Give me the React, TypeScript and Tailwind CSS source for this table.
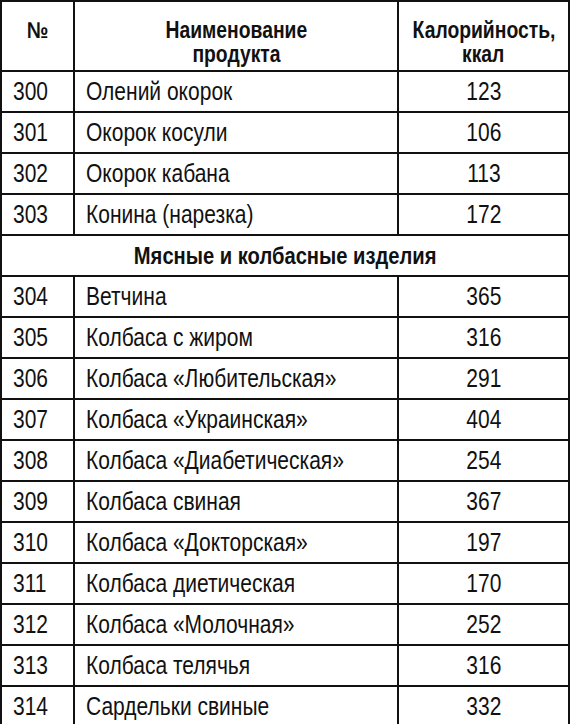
const meat = [
  { id: 300, name: 'Олений окорок', kcal: 123 },
  { id: 301, name: 'Окорок косули', kcal: 106 },
  { id: 302, name: 'Окорок кабана', kcal: 113 },
  { id: 303, name: 'Конина (нарезка)', kcal: 172 },
];

const sausages = [
  { id: 304, name: 'Ветчина', kcal: 365 },
  { id: 305, name: 'Колбаса с жиром', kcal: 316 },
  { id: 306, name: 'Колбаса «Любительская»', kcal: 291 },
  { id: 307, name: 'Колбаса «Украинская»', kcal: 404 },
  { id: 308, name: 'Колбаса «Диабетическая»', kcal: 254 },
  { id: 309, name: 'Колбаса свиная', kcal: 367 },
  { id: 310, name: 'Колбаса «Докторская»', kcal: 197 },
  { id: 311, name: 'Колбаса диетическая', kcal: 170 },
  { id: 312, name: 'Колбаса «Молочная»', kcal: 252 },
  { id: 313, name: 'Колбаса телячья', kcal: 316 },
  { id: 314, name: 'Сардельки свиные', kcal: 332 },
];

// Liberation Sans squeezed to the width of a narrow grotesque
function Narrow({ children, center }: { children: React.ReactNode; center?: boolean }) {
  return (
    <span
      className={
        center
          ? 'inline-block whitespace-nowrap origin-center scale-x-[0.84]'
          : 'inline-block whitespace-nowrap origin-left scale-x-[0.84]'
      }
    >
      {children}
    </span>
  );
}

function Row({ id, name, kcal }: { id: number; name: string; kcal: number }) {
  return (
    <tr className="h-[41px]">
      <td className="border-2 border-[#111] pl-[11px] align-middle">
        <Narrow>{id}</Narrow>
      </td>
      <td className="border-2 border-[#111] pl-[11px] align-middle">
        <Narrow>{name}</Narrow>
      </td>
      <td className="border-2 border-[#111] text-center align-middle">
        <Narrow center>{kcal}</Narrow>
      </td>
    </tr>
  );
}

export default function App() {
  return (
    <div className="min-h-screen bg-white text-[#111] font-['Liberation_Sans',Arial,sans-serif]">
      <table className="w-[568px] table-fixed border-collapse text-[25px] leading-none">
        <colgroup>
          <col className="w-[73px]" />
          <col className="w-[324px]" />
          <col className="w-[171px]" />
        </colgroup>
        <thead>
          <tr className="h-[70px] text-[23px] font-bold leading-[24px]">
            <th className="border-2 border-[#111] pt-[16px] align-top">
              <Narrow center>№</Narrow>
            </th>
            <th className="border-2 border-[#111] pt-[16px] align-top">
              <Narrow center>Наименование</Narrow>
              <br />
              <Narrow center>продукта</Narrow>
            </th>
            <th className="border-2 border-[#111] pt-[16px] align-top">
              <Narrow center>Калорийность,</Narrow>
              <br />
              <Narrow center>ккал</Narrow>
            </th>
          </tr>
        </thead>
        <tbody>
          {meat.map((r) => (
            <Row key={r.id} {...r} />
          ))}
          <tr className="h-[41px]">
            <td colSpan={3} className="border-2 border-[#111] text-center align-middle text-[24px] font-bold">
              <Narrow center>Мясные и колбасные изделия</Narrow>
            </td>
          </tr>
          {sausages.map((r) => (
            <Row key={r.id} {...r} />
          ))}
        </tbody>
      </table>
    </div>
  );
}
